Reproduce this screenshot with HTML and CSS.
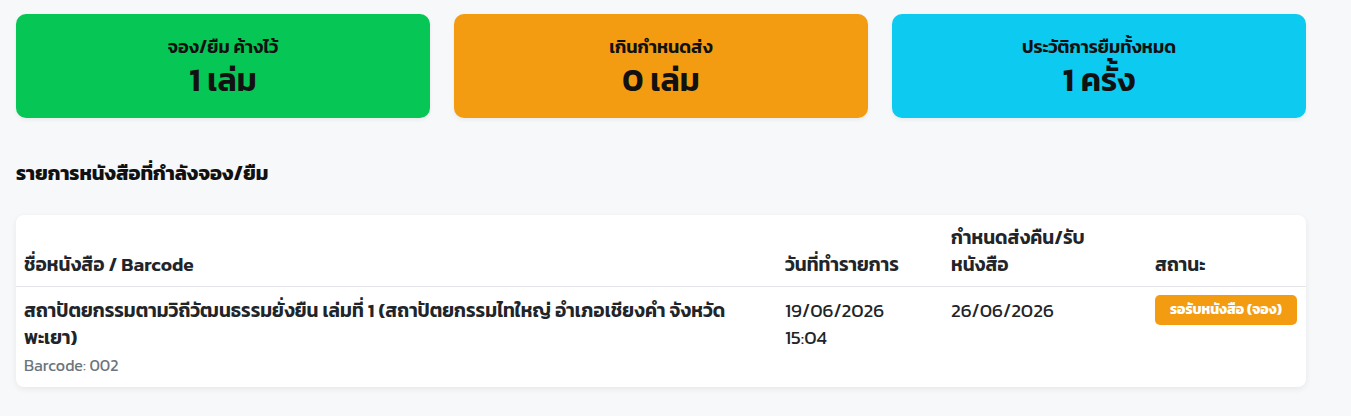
FILE: index.html
```html
<!DOCTYPE html>
<html lang="th">
<head>
<meta charset="utf-8">
<title>รายการจอง/ยืม</title>
<link rel="stylesheet" href="styles.css">
</head>
<body>
<main class="page">
  <section class="stats">
    <div class="stat stat-green">
      <div class="stat-label">จอง/ยืม ค้างไว้</div>
      <div class="stat-value">1 เล่ม</div>
    </div>
    <div class="stat stat-orange">
      <div class="stat-label">เกินกำหนดส่ง</div>
      <div class="stat-value">0 เล่ม</div>
    </div>
    <div class="stat stat-cyan">
      <div class="stat-label">ประวัติการยืมทั้งหมด</div>
      <div class="stat-value">1 ครั้ง</div>
    </div>
  </section>

  <h2 class="section-title">รายการหนังสือที่กำลังจอง/ยืม</h2>

  <div class="table-card">
    <table class="loans">
      <thead>
        <tr>
          <th class="c-title">ชื่อหนังสือ / Barcode</th>
          <th class="c-date">วันที่ทำรายการ</th>
          <th class="c-due">กำหนดส่งคืน/รับหนังสือ</th>
          <th class="c-status">สถานะ</th>
        </tr>
      </thead>
      <tbody>
        <tr>
          <td>
            <div class="book-title">สถาปัตยกรรมตามวิถีวัฒนธรรมยั่งยืน เล่มที่ 1 (สถาปัตยกรรมไทใหญ่ อำเภอเชียงคำ จังหวัดพะเยา)</div>
            <div class="barcode">Barcode: 002</div>
          </td>
          <td>19/06/2026<br>15:04</td>
          <td>26/06/2026</td>
          <td><span class="badge">รอรับหนังสือ (จอง)</span></td>
        </tr>
      </tbody>
    </table>
  </div>
</main>
</body>
</html>
```

FILE: styles.css
```css
* { box-sizing: border-box; }

html, body {
  margin: 0;
  padding: 0;
}

body {
  background: #f7f8fa;
  color: #212529;
  font-family: "Kanit", "Noto Sans Thai", "Noto Sans", "Liberation Sans", sans-serif;
  font-size: 19px;
}

.page {
  padding: 14px 45px 20px 16px;
}

.stats {
  display: grid;
  grid-template-columns: repeat(3, 1fr);
  gap: 24px;
}

.stat {
  height: 104px;
  border-radius: 10px;
  box-shadow: 0 2px 4px rgba(0, 0, 0, 0.06);
  display: flex;
  flex-direction: column;
  align-items: center;
  justify-content: center;
  gap: 3px;
  color: #111;
}

.stat-green { background: #06c755; }
.stat-orange { background: #f39c12; }
.stat-cyan { background: #0dcaf0; }

.stat-label {
  font-size: 18px;
  font-weight: 600;
  line-height: 24px;
  margin-top: 1px;
}

.stat-value {
  font-size: 32px;
  font-weight: 600;
  line-height: 36px;
}

.section-title {
  margin: 41px 0 28px;
  font-size: 20px;
  font-weight: 700;
  line-height: 28px;
  color: #111;
}

.table-card {
  background: #fff;
  border-radius: 8px;
  box-shadow: 0 2px 6px rgba(0, 0, 0, 0.07);
  padding: 0 0 7px;
  overflow: hidden;
}

.loans {
  width: 100%;
  border-collapse: collapse;
  table-layout: fixed;
}

.loans th,
.loans td {
  text-align: left;
  vertical-align: top;
  padding: 10px 8px 0;
  line-height: 27px;
  font-size: 19px;
}

.loans th {
  vertical-align: bottom;
  font-weight: 600;
  padding: 9px 8px 8px;
  border-bottom: 1px solid #e2e4e7;
  color: #212529;
}

.c-title { width: 761px; }
.c-date { width: 166px; }
.c-due { width: 204px; }
.c-status { width: 159px; }

.book-title {
  font-weight: 600;
}

.barcode {
  font-size: 16px;
  color: #6c757d;
  line-height: 29px;
}

.badge {
  display: inline-block;
  vertical-align: top;
  margin-top: -2px;
  background: #f39c12;
  color: #fff;
  font-size: 14px;
  font-weight: 700;
  line-height: 20px;
  padding: 5px 0;
  border-radius: 5px;
  white-space: nowrap;
  width: 142px;
  text-align: center;
}
```
